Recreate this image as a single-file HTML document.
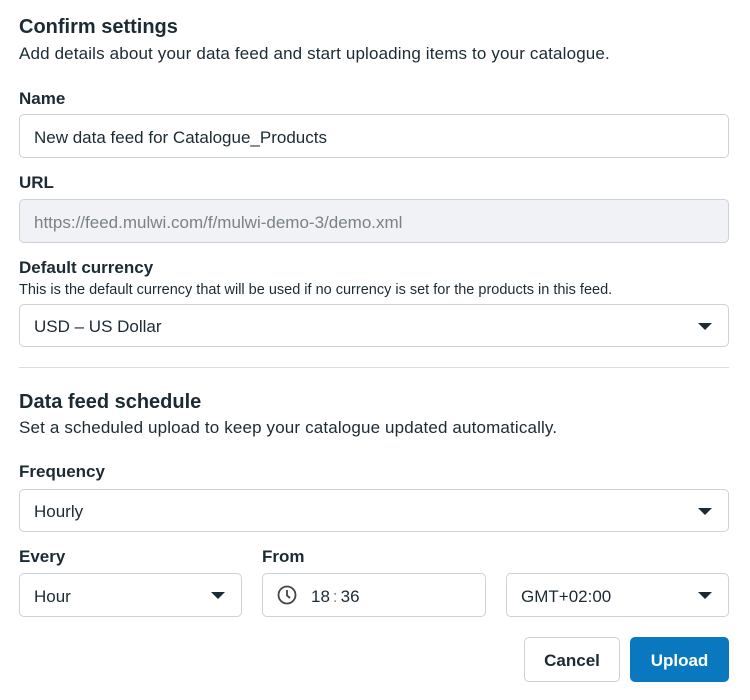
<!DOCTYPE html><html><head><style>
body{margin:0;width:750px;height:700px;background:#fff;font-family:"Liberation Sans",sans-serif;color:#1c2b33;position:relative;overflow:hidden}
.a{position:absolute;white-space:nowrap}
.h{font-size:20px;font-weight:bold}
.l{font-size:17px;font-weight:bold}
.t{font-size:17px;letter-spacing:0.15px}
.box{position:absolute;border:1px solid #cbd2d9;border-radius:5px;box-sizing:border-box;font-size:17px;display:flex;align-items:center;padding-left:14px;padding-top:3px;color:#1c2b33}
.dd::after{content:"";position:absolute;right:16px;top:50%;margin-top:-3px;border-left:7px solid transparent;border-right:7px solid transparent;border-top:7px solid #1c2b33}
</style></head><body>
<div class="a h" style="left:19px;top:16px">Confirm settings</div>
<div class="a t" style="left:19px;top:44px">Add details about your data feed and start uploading items to your catalogue.</div>
<div class="a l" style="left:19px;top:89px">Name</div>
<div class="box" style="left:19px;top:114px;width:710px;height:44px">New data feed for Catalogue_Products</div>
<div class="a l" style="left:19px;top:173px">URL</div>
<div class="box" style="left:19px;top:199px;width:710px;height:44px;background:#f0f2f5;color:#7a8288">https://feed.mulwi.com/f/mulwi-demo-3/demo.xml</div>
<div class="a l" style="left:19px;top:258px">Default currency</div>
<div class="a" style="left:19px;top:282px;font-size:14.5px">This is the default currency that will be used if no currency is set for the products in this feed.</div>
<div class="box dd" style="left:19px;top:304px;width:710px;height:43px">USD – US Dollar</div>
<div class="a" style="left:19px;top:367px;width:710px;height:1px;background:#dadde1"></div>
<div class="a h" style="left:19px;top:391px">Data feed schedule</div>
<div class="a t" style="left:19px;top:418px">Set a scheduled upload to keep your catalogue updated automatically.</div>
<div class="a l" style="left:19px;top:462px">Frequency</div>
<div class="box dd" style="left:19px;top:489px;width:710px;height:43px">Hourly</div>
<div class="a l" style="left:19px;top:547px">Every</div>
<div class="a l" style="left:262px;top:547px">From</div>
<div class="box dd" style="left:19px;top:573px;width:223px;height:44px">Hour</div>
<div class="box" style="left:262px;top:573px;width:224px;height:44px"><svg width="20" height="20" viewBox="0 0 20 20" style="margin-right:14px;margin-top:-3px"><circle cx="10" cy="10" r="8.5" fill="none" stroke="#444" stroke-width="1.8"/><path d="M10 5v5.5l3 2.5" fill="none" stroke="#444" stroke-width="1.8"/></svg>18<span style="margin:0 3px;color:#888">:</span>36</div>
<div class="box dd" style="left:506px;top:573px;width:223px;height:44px">GMT+02:00</div>
<div class="box" style="left:524px;top:637px;width:96px;height:45px;justify-content:center;padding:0;padding-top:2px;font-weight:bold">Cancel</div>
<div class="box" style="left:630px;top:637px;width:99px;height:45px;justify-content:center;padding:0;padding-top:2px;font-weight:bold;background:#0a78be;border-color:#0a78be;color:#fff">Upload</div>
</body></html>
